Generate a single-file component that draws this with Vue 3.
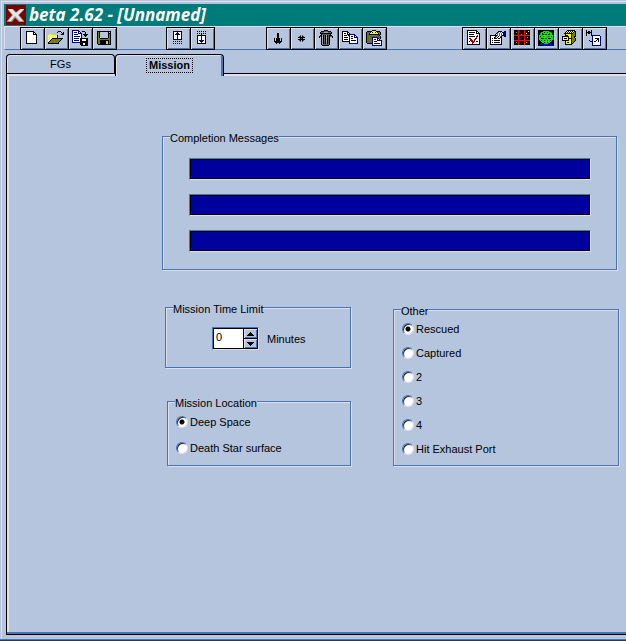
<template>
  <div class="window">
    <header class="title-bar">
      <svg class="app-icon" viewBox="0 0 20 20" width="20" height="20">
        <rect width="20" height="20" fill="#7b0000"/>
        <path d="M2 4h5l3 3 4-3h4v1l-5 5 5 6v1h-5l-4-4-3 4H1v-1l5-6-4-5z" fill="#949494"/>
        <path d="M2 4h4l4 4 5-4h3l-6 6 5 6h-3l-5-5-4 5H2l5-6z" fill="#e7e7e7"/>
      </svg>
      <h1>beta 2.62 - [Unnamed]</h1>
    </header>
    <nav class="toolbar">
      <div v-for="(g, gi) in groups" :key="gi" class="tool-group">
        <button v-for="t in g" :key="t.label" type="button" class="tool" :aria-label="t.label">
          <svg viewBox="0 0 16 16" width="16" height="16" shape-rendering="crispEdges">
            <rect v-for="(r, i) in runs(t.rows)" :key="i" :x="r.x" :y="r.y" :width="r.w" height="1" :fill="r.fill"/>
          </svg>
        </button>
      </div>
    </nav>
    <div class="tabs" role="tablist">
      <button v-for="t in tabs" :key="t" type="button" role="tab" class="tab" :class="{ active: tab === t }" :aria-selected="tab === t" @click="tab = t"><span>{{ t }}</span></button>
    </div>
    <main class="page">
      <fieldset class="group messages">
        <legend>Completion Messages</legend>
        <input v-for="(m, i) in messages" :key="i" v-model="messages[i]" type="text" class="message" :aria-label="'Completion message ' + (i + 1)">
      </fieldset>
      <div class="columns">
        <div class="column">
          <fieldset class="group time">
            <legend>Mission Time Limit</legend>
            <div class="spinner">
              <input id="minutes" v-model.number="minutes" type="text">
              <div class="spin-buttons">
                <button type="button" aria-label="More" @click="minutes++">
                  <svg viewBox="0 0 7 4" width="7" height="4" shape-rendering="crispEdges"><path d="M3 0h1v1h1v1h1v1h1v1H0V3h1V2h1V1h1z"/></svg>
                </button>
                <button type="button" aria-label="Less" @click="minutes = Math.max(0, minutes - 1)">
                  <svg viewBox="0 0 7 4" width="7" height="4" shape-rendering="crispEdges"><path d="M0 0h7v1H6v1H5v1H4v1H3V3H2V2H1V1H0z"/></svg>
                </button>
              </div>
            </div>
            <label for="minutes">Minutes</label>
          </fieldset>
          <fieldset class="group location">
            <legend>Mission Location</legend>
            <label v-for="l in locations" :key="l" class="option"><input v-model="location" type="radio" name="location" :value="l">{{ l }}</label>
          </fieldset>
        </div>
        <fieldset class="group other">
          <legend>Other</legend>
          <label v-for="o in others" :key="o" class="option"><input v-model="other" type="radio" name="other" :value="o">{{ o }}</label>
        </fieldset>
      </div>
    </main>
  </div>
</template>

<script setup>
import { ref } from 'vue'

const tabs = ['FGs', 'Mission']
const tab = ref('Mission')
const messages = ref(['', '', ''])
const minutes = ref(0)
const locations = ['Deep Space', 'Death Star surface']
const location = ref('Deep Space')
const others = ['Rescued', 'Captured', '2', '3', '4', 'Hit Exhaust Port']
const other = ref('Rescued')

// one letter per pixel, anything else is transparent
const palette = { K: '#000', W: '#fff', Y: '#ffff00', O: '#7b7b00', N: '#00007b', R: '#9c0000', D: '#5a5a5a', L: '#a5a5a5', E: '#ff0000', G: '#00e700', B: '#0000ff' }

function runs(rows) {
  const out = []
  rows.forEach((row, y) => {
    for (const m of row.matchAll(/([A-Z])\1*/g)) {
      out.push({ x: m.index, y, w: m[0].length, fill: palette[m[1]] })
    }
  })
  return out
}

const groups = [
  [
    { label: 'New', rows: [
      '', '..KKKKKKKK', '..KWWWWWWKK', '..KWWWWWWKWK', '..KWWWWWWKKKK', '..KWWWWWWWWWK', '..KWWWWWWWWWK', '..KWWWWWWWWWK',
      '..KWWWWWWWWWK', '..KWWWWWWWWWK', '..KWWWWWWWWWK', '..KWWWWWWWWWK', '..KWWWWWWWWWK', '..KKKKKKKKKKK' ] },
    { label: 'Open', rows: [
      '', '..........KKK', '.........K...K.K', '..............KK', '.YYY.........KKK', 'YWYWYYYYYK', 'WYWYWYWYWK', 'YWYWYWYWYK',
      'WYWYKKKKKKKKKKK', 'YWYKOOOOOOOOOK', 'WYKOOOOOOOOOK', 'YKOOOOOOOOOK', 'KOOOOOOOOOK', 'KKKKKKKKKKK' ] },
    { label: 'Save as', rows: [
      'NNNNNNN', 'NWWWWWNN..KKK', 'NWNNNWNWN....K', 'NWWWWWNNNN...K', 'NWNNNNWWWN.KKKKK', 'NWWWWWWWWN..KKK', 'NWNNNNNNWN...K', 'NWWWWWWWWN',
      'NWNNNNNWKKKKKKKK', 'NWWWWWWWKKWWWWKK', 'NWNNNNNWKKWWWWKK', 'NWWWWWWWKKKKKKKK', 'NNNNNNNNKKKKKKKK', '........KKKWWKKK', '........KKKWWKKK', '.........KKKKKKK' ] },
    { label: 'Save', rows: [
      '', '.KKKKKKKKKKKKKK', '.KOK........K.K', '.KOK........KKK', '.KOK........KOK', '.KOK........KOK', '.KOK........KOK', '.KOK........KOK',
      '.KOOKKKKKKKKOOK', '.KOOOOOOOOOOOOK', '.KOOKKKKKKKKKOK', '.KOOKKKKKK..KOK', '.KOOKKKKKK..KOK', '.KOOKKKKKK..KOK', '..KKKKKKKKKKKKK' ] },
  ],
  [
    { label: 'Move up', rows: [
      '', '...KKKKKKKKK', '...KWWWNWWWK', '...KWWNNNWWK', '...KWNNNNNWK', '...KWWWNWWWK', '...KWWWNWWWK', '...KWWWNWWWK',
      '...KWWWNWWWK', '...KKKKNKKKK', '', '...K.K.K.K.K', '', '...K.K.K.K.K' ] },
    { label: 'Move down', rows: [
      '', '...K.K.K.K.K', '', '...K.K.K.K.K', '.......N', '...KKKKNKKKK', '...KWWWNWWWK', '...KWWWNWWWK',
      '...KWWWNWWWK', '...KWWWNWWWK', '...KWNNNNNWK', '...KWWNNNWWK', '...KWWWNWWWK', '...KKKKKKKKK' ] },
  ],
  [
    { label: 'Craft', rows: [
      '', '', '', '.......KK', '.......KK', '.......KK', '.......KK', '.......KK',
      '....K.KKKK.K', '....K.KKKK.K', '....K.KKKK.K', '....KKKKKKKK', '.....KKKKKK', '......K..K' ] },
    { label: 'Nav point', rows: [
      '', '', '', '', '', '......D.D', '.....DK.KD', '....KKKKKKK', '......KDK', '....KKKKKKK', '.....DK.KD', '......D.D' ] },
    { label: 'Delete', rows: [
      '......KKKK', '...KKKDDDDKKK', '..KDDDLLLLDDDK', '..KKKKKKKKKKKK', '...KDDDDDDDDK', '..KKLKDKLKDKKK', '.KDKLKDKLKDKDDK', '.K.KLKDKLKDK..K',
      '...KLKDKLKDK', '...KLKDKLKDK', '...KLKDKLKDK', '...KLKDKLKDK', '...KLKDKLKDK', '...KLKDKLKDK', '...KDDDDDDDK', '....KKKKKKK' ] },
    { label: 'Copy', rows: [
      '', 'KKKKKK', 'KWWWWKK', 'KWKKWKWK', 'KWWWWKKNNNNNN', 'KWKKKWKNWWWWNN', 'KWWWWWWNWKKWNWN', 'KWKKKKWNWWWWNNNN',
      'KWWWWWWNWKKWWWWN', 'KWKKKKWNWWWWWWWN', 'KWWWWWWNWKKKKKWN', 'KKKKKKKNWWWWWWWN', '.......NWWWWWWWN', '.......NNNNNNNNN' ] },
    { label: 'Paste', rows: [
      '......KKKK', '.KKKKKYYYYKKKK', 'KODOKYKYYKYKODK', 'KDOKYYYYYYYYKOK', 'KODKKKKKKKKKKDK', 'KDODODODODODDK', 'KODODODODODODOK', 'KDODODNNNNNNODK',
      'KODODONWWWWNNOK', 'KDODODNWNNWNWN', 'KODODONWWWWNNNNN', 'KDODODNWNNNWWWWN', 'KODODONWWWWWWWWN', '.KKKKKNWNNNNNNWN', '......NWWWWWWWWN', '......NNNNNNNNNN' ] },
  ],
  [
    { label: 'Check', rows: [
      '.KKKKKKKKKK', '.KWWWWWWWWKK', '.KWKKKKKKWKWK', '.KWWWWWWWWKKKK', '.KWKKKKKWWWWWK', '.KWWWWWWWWWRWK', '.KWKKKKKKWRRWK', '.KWWWWWWWWRWWK',
      '.KWRRWWWWRRWWK', '.KWWRRWWRRWWWK', '.KWWRRRWRWWWWK', '.KWKWRRRRWKKWK', '.KWWWWRRWWWWWK', '.KWWWWRWWWWWWK', '.KKKKKKKKKKKKK' ] },
    { label: 'Properties', rows: [
      '', '........KKKK..NN', '.......KDWDWKNNN', '......KDWDWDWNNN', '.....KWDWDWDWNNN', 'KKKKKKKDWDWDKNNN', 'KWWWWKDWKWDK..NN', 'KWWWKDWKWWKK',
      'KWKWKKKWKKWK', 'KWWWWWWWWWWK', 'KWKWKKKKKKWK', 'KWWWWWWWWWWK', 'KWKWKKKKKKWK', 'KWWWWWWWWWWK', 'KKKKKKKKKKKK' ] },
    { label: 'Map', rows: [
      'KKKKEKKKKKEKKKKK', 'KKKKEKKKKKEKKKYK', 'KKGKEKKKKKEKKKKK', 'KKKKEKKKKKEKYKKK', 'KKKKEKKGKKEKKKKK', 'EEEEEEEEEEEEEEEE', 'KKKKEKKKKKEKKKKK', 'KKKKEKKBKKEKKGKK',
      'KKKKEKBKKKEKKKKK', 'KKKKEKKKKKEKKKKK', 'EEEEEEEEEEEEEEEE', 'KKKKEKKKKKEKKKKK', 'KKGKEKKKKKEKGKKK', 'KKKKEKKKKKEKKKKK', 'KKKKEKKKKKEKKKKK' ] },
    { label: 'Globe', rows: [
      'KKKKKKKKKKKKKKKK', 'KKKKKGGGGGGKKKKK', 'KKKGGGKGGKGGGKKK', 'KKGGKGGGGGGKGGKK', 'KKGGKKGKKGKKGGKK', 'KGGGGGGGGGGGGGGK', 'KGKGGKGGGGKGGKGK', 'KGGGGGGGGGGGGGGK',
      'KGGKKKGKKGKKKGGK', 'KGGGGGGGGGGGGGGK', 'KKGKGGKGGKGGKGKK', 'KKKGGGGGGGGGGKKK', 'KKKKGGKGGKGGKKKK', 'KKKBKBGGGGBKBKKK', 'KKBBBKBBBBKBBBKK', 'KBKBKBBKKBBKBKBK' ] },
    { label: 'Archive', rows: [
      '.....KKKKKKKK', '....KYKYKYKYKK', '...KYKYKYKYKOK', '..KKKKKKKKKOOK', '...KYYYYYKOOOK', '...KKKYYYKOOOK', 'KKKKKKKYYKOOKK', 'KYYYYYKYYKOOK',
      'KYKKKYKKKKOOOK', 'KYYYYYKYYKOOOK', 'KKKKKKKYYKOOOK', '...KYYYYYKOOK', '...KYKKYYKOK', '...KYYYYYKK', '...KKKKKKK' ] },
    { label: 'Link', rows: [
      'K....K', 'K.KK.K', 'KKKKKK', 'K.KK.K', 'K....K', 'K....KNNNNNNNN', '......NWWWWWWWN', '......NWWWWWWWN',
      '......NWWKKKKWN', '......NWWWWKKWN', '...K..NWWWKWKWN', '....KKNWKKWWKWN', '......NWWWWWWWN', '......NWWWWWWWN', '......NWWWWWWWN', '......NNNNNNNNN' ] },
  ],
]
</script>

<style>
body { margin: 0; background: #b5c5de; }
</style>
<style scoped>
.window { --face: #b5c5de; --light: #dedeef; --shade: #4a73b5; box-sizing: border-box; min-height: 100vh; display: flex; flex-direction: column; padding: 4px 0 5px 4px; background: var(--face); border-bottom: 1px solid #393942; box-shadow: inset 0 -1px 0 var(--shade), inset 1px 1px 0 var(--face), inset 2px 2px 0 var(--light); color: #000; font: 11px/14px "Liberation Sans", Arial, sans-serif; }
button, input { font: inherit; color: inherit; margin: 0; padding: 0; box-sizing: border-box; outline: none; }
.title-bar { display: flex; align-items: center; gap: 3px; height: 22px; padding-left: 2px; background: #007b7b; }
.title-bar h1 { margin: 0; color: #fff; font: italic 700 17px/20px "Open Sans", Verdana, sans-serif; white-space: nowrap; }
.toolbar { display: flex; height: 22px; padding: 0 0 0 15px; border-top: 1px solid var(--light); border-left: 1px solid var(--light); border-bottom: 1px solid var(--shade); }
.tool-group { display: flex; height: 23px; }
.tool-group:nth-child(2) { margin-left: 49px; }
.tool-group:nth-child(3) { margin-left: 51px; }
.tool-group:nth-child(4) { margin-left: 75px; }
.tool { display: flex; justify-content: center; align-items: center; width: 25px; height: 23px; padding: 0 1px 1px 0; background: var(--face); border: 1px solid #000; box-shadow: inset 1px 1px 0 var(--light), inset -1px -1px 0 var(--shade); }
.tool svg { display: block; width: 16px; height: 16px; flex: none; }
.tool + .tool { margin-left: -1px; }
.tabs { display: flex; margin: 4px 0 0 2px; }
.tab { width: 109px; height: 19px; background: var(--face); border: 1px solid #000; border-width: 1px 1px 0 1px; border-radius: 4px 4px 0 0; box-shadow: inset 1px 1px 0 var(--light); }
.tab span { display: inline-block; padding: 0 2px; line-height: 13px; }
.tab.active { position: relative; height: 22px; margin-bottom: -3px; padding-bottom: 2px; font-weight: 700; box-shadow: inset 1px 1px 0 var(--light), inset -2px 0 0 var(--shade); }
.tab.active span { outline: 1px dotted #000; }
.page { flex: 1; margin-left: 2px; padding: 54px 7px 20px 155px; border: 1px solid #000; border-right: 0; box-shadow: inset 0 -2px 0 var(--shade), inset 2px 2px 0 var(--light); }
.group { --pad: 8px; min-width: 0; margin: 0; border: 1px solid var(--shade); box-shadow: 1px 1px 0 var(--light), inset 1px 1px 0 var(--light); }
.group legend { margin-left: calc(7px - var(--pad)); padding: 4px 0 0 0; line-height: 12px; background: var(--face); }
.messages { --pad: 26px; display: flex; flex-direction: column; gap: 14px; margin-right: 2px; padding: 14px 25px 17px var(--pad); }
.message { width: 100%; height: 22px; padding: 0 4px; background: #00009c; color: #fff; border: 1px solid; border-color: var(--shade) var(--light) var(--light) var(--shade); box-shadow: inset 0 0 0 1px #000; }
.columns { display: grid; grid-template-columns: 186fr 226fr; gap: 42px; margin: 29px 0 0 3px; align-items: start; }
.column { display: flex; flex-direction: column; gap: 25px; }
.time { --pad: 46px; display: flex; align-items: center; gap: 8px; padding: 12px 8px 17px var(--pad); }
.spinner { display: flex; width: 47px; height: 23px; border: 1px solid; border-color: var(--shade) var(--light) var(--light) var(--shade); box-sizing: border-box; }
.spinner input { flex: 1; min-width: 0; padding: 0 0 4px 2px; background: #fff; border: 1px solid #000; }
.spin-buttons { display: flex; flex-direction: column; margin-left: -1px; }
.spin-buttons button { display: flex; justify-content: center; align-items: center; width: 15px; height: 11px; background: var(--face); border: 1px solid #000; box-shadow: inset 1px 1px 0 var(--light), inset -1px -1px 0 var(--shade); }
.spin-buttons button + button { margin-top: -1px; }
.location { display: flex; flex-direction: column; gap: 10px; margin-left: 2px; padding: 5px 8px 9px var(--pad); }
.other { display: flex; flex-direction: column; gap: 8px; margin-top: 2px; padding: 4px 8px 8px var(--pad); }
.option { display: flex; align-items: center; gap: 2px; height: 16px; white-space: nowrap; }
.option input { appearance: none; flex: none; width: 12px; height: 12px; background: #fff; border: 1px solid; border-color: var(--shade) var(--light) var(--light) var(--shade); border-radius: 50%; box-shadow: inset 1px 1px 0 #292931; }
.option input:checked { background: radial-gradient(circle, #000 2px, #fff 3px); }
</style>
